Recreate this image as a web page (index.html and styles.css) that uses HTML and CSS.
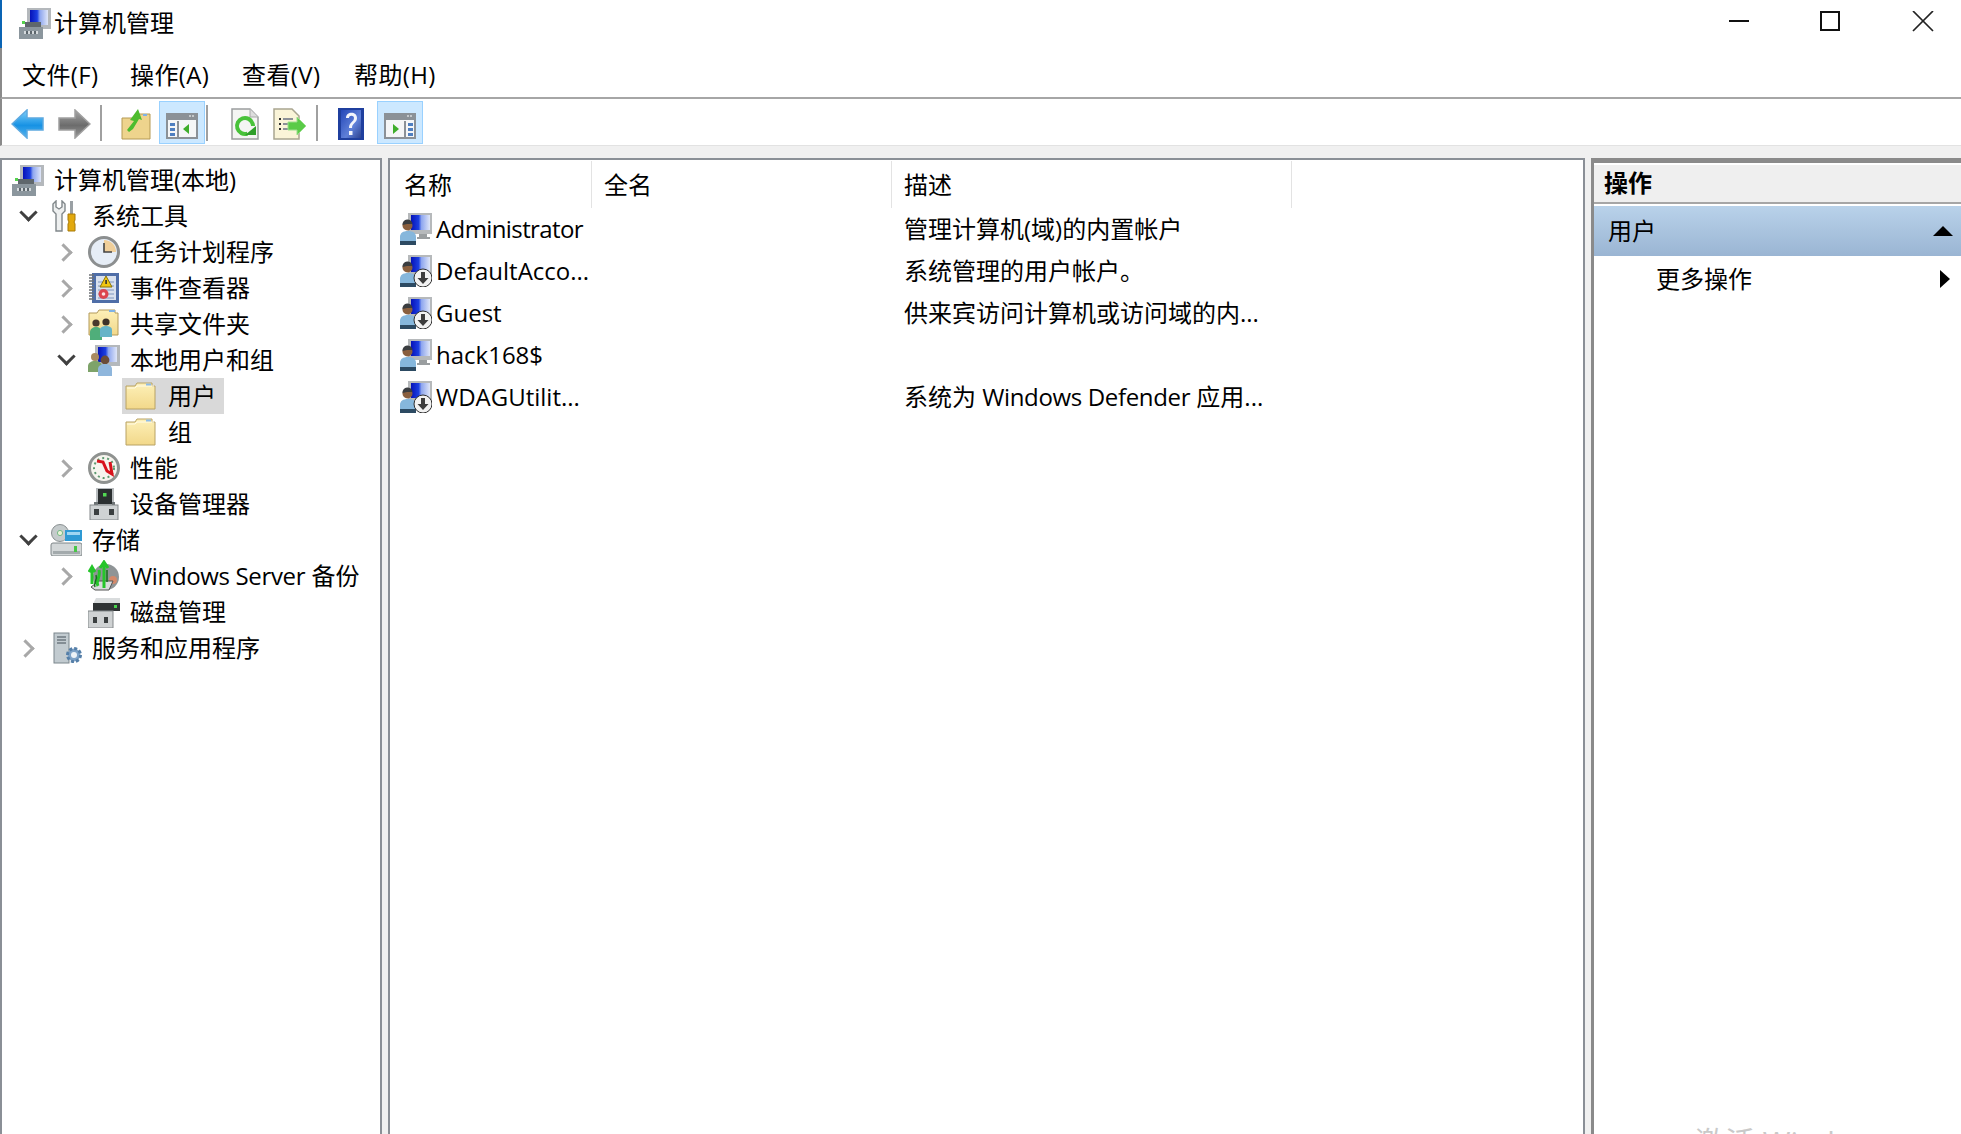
FILE: index.html
```html
<!DOCTYPE html>
<html lang="zh-CN">
<head>
<meta charset="utf-8">
<title>计算机管理</title>
<link rel="stylesheet" href="styles.css">
</head>
<body>
<svg class="defs" aria-hidden="true">
  <defs>
    <linearGradient id="scr" x1="0" x2="1" y1="0" y2="0"><stop offset="0" stop-color="#0612b8"/><stop offset=".4" stop-color="#1c3fe0"/><stop offset=".55" stop-color="#8ea6ef"/><stop offset="1" stop-color="#dfe6f8"/></linearGradient>
    <linearGradient id="fold" x1="0" x2="0" y1="0" y2="1"><stop offset="0" stop-color="#fdf0b8"/><stop offset="1" stop-color="#f2d88a"/></linearGradient>
    <linearGradient id="blueArrow" x1="0" x2="0" y1="0" y2="1"><stop offset="0" stop-color="#7fd0fa"/><stop offset=".55" stop-color="#1792e4"/><stop offset="1" stop-color="#57b4ee"/></linearGradient>
    <linearGradient id="grayArrow" x1="0" x2="0" y1="0" y2="1"><stop offset="0" stop-color="#a8a8a8"/><stop offset=".55" stop-color="#6c6c6c"/><stop offset="1" stop-color="#9a9a9a"/></linearGradient>
    <linearGradient id="help" x1="0" x2="1" y1="0" y2="1"><stop offset="0" stop-color="#2447b8"/><stop offset=".6" stop-color="#5f80d8"/><stop offset="1" stop-color="#2d4390"/></linearGradient>

    <symbol id="i-computer" viewBox="0 0 32 32">
      <rect x="8" y="1" width="24" height="21" fill="#b4b8bc"/>
      <rect x="11" y="3" width="18" height="15" fill="url(#scr)"/>
      <path d="M6 15h16v5H6z" fill="#5f676c"/>
      <rect x="0" y="20" width="24" height="12" fill="#8b969d"/>
      <rect x="5" y="24" width="14" height="3" fill="#d4d9dc"/>
      <rect x="7" y="24" width="2" height="3" fill="#5c666c"/><rect x="11" y="24" width="2" height="3" fill="#5c666c"/><rect x="15" y="24" width="2" height="3" fill="#5c666c"/>
      <rect x="3" y="14" width="3" height="3" fill="#55d24d"/>
    </symbol>

    <symbol id="i-tools" viewBox="0 0 32 32">
      <path d="M6 1v6l3 2 3-2V1l3 3v7l-3 3v17H6V14l-3-3V4z" fill="#eef0f0" stroke="#80878a" stroke-width="1.4"/>
      <rect x="20" y="1" width="3" height="13" fill="#9aa0a4"/>
      <path d="M18 14h7v6l-1 2 1 2v7h-7v-7l1-2-1-2z" fill="#e2a90f" stroke="#a87a08"/>
    </symbol>

    <symbol id="i-clock" viewBox="0 0 32 32">
      <circle cx="16" cy="16" r="14.5" fill="#e6edf6" stroke="#8c8f90" stroke-width="3"/>
      <path d="M16 4a12 12 0 0 1 12 12H16z" fill="#f0cf9a"/>
      <path d="M16 7v9h8" fill="none" stroke="#444" stroke-width="1.6"/>
    </symbol>

    <symbol id="i-event" viewBox="0 0 32 32">
      <rect x="4" y="1" width="27" height="30" fill="#4f6ea8"/>
      <rect x="8" y="4" width="20" height="24" fill="#d9e1ee"/>
      <path d="M10 10h16M10 14h16M10 18h16M10 22h16M10 26h16" stroke="#7f96bf" stroke-width="1"/>
      <path d="M1 3h5M1 6h5M1 9h5M1 12h5M1 15h5M1 18h5M1 21h5M1 24h5M1 27h5" stroke="#6e7276" stroke-width="1.6"/>
      <path d="M18 4l6 11H12z" fill="#f1c613" stroke="#8a7409"/>
      <rect x="17.3" y="8" width="1.6" height="4" fill="#333"/>
      <circle cx="15.5" cy="22" r="5" fill="#dc4650"/>
      <circle cx="15.5" cy="22" r="1.8" fill="#fbe5e5"/>
    </symbol>

    <symbol id="i-share" viewBox="0 0 32 32">
      <path d="M1 5h8l2-3h16v3h3v22H1z" fill="url(#fold)" stroke="#b39a5b"/>
      <rect x="21" y="2" width="6" height="2" fill="#7fb2e6"/>
      <circle cx="8" cy="15" r="3.6" fill="#4a3a2c"/>
      <path d="M2 32v-8c0-3 3-5 6-5s6 2 6 5v8z" fill="#4fae7a"/>
      <circle cx="18" cy="14" r="3.6" fill="#3e3228"/>
      <path d="M12 29v-7c0-3 3-4 6-4s6 1 6 4v7z" fill="#66b4c8"/>
    </symbol>

    <symbol id="i-users" viewBox="0 0 32 32">
      <rect x="7" y="1" width="25" height="21" fill="#b4b8bc"/>
      <rect x="10" y="3" width="19" height="15" fill="url(#scr)"/>
      <circle cx="7" cy="13" r="4" fill="#a98a5f"/>
      <path d="M0 28v-6c0-3 3-5 7-5s7 2 7 5v6z" fill="#7ea36a"/>
      <circle cx="17" cy="16" r="4.4" fill="#6a4c38"/>
      <path d="M10 32v-7c0-3 3-5 7-5s7 2 7 5v7z" fill="#8fb6dc"/>
    </symbol>

    <symbol id="i-folder" viewBox="0 0 32 32">
      <path d="M1 6h9l2-3h15v3h3v23H1z" fill="url(#fold)" stroke="#b8a264"/>
      <path d="M2 8h8l2-2h17" fill="none" stroke="#fffbe6"/>
      <rect x="21" y="3.5" width="5" height="2" fill="#8dbbe8"/>
    </symbol>

    <symbol id="i-perf" viewBox="0 0 32 32">
      <circle cx="16" cy="16" r="14.5" fill="#f6f4ee" stroke="#8f9290" stroke-width="3"/>
      <circle cx="16" cy="16" r="10" fill="none" stroke="#5d9a70" stroke-width="2" stroke-dasharray="2 3"/>
      <path d="M9 9l6 1 4 9 5 3-2-12" fill="none" stroke="#d8121c" stroke-width="3"/>
    </symbol>

    <symbol id="i-device" viewBox="0 0 32 32">
      <rect x="8" y="0" width="18" height="17" fill="#b8bcbe"/>
      <rect x="10" y="1" width="14" height="15" fill="#2b2f30"/>
      <rect x="15" y="5" width="3.5" height="3.5" fill="#52d852"/>
      <path d="M6 14h4v4H6zM24 14h3v4h-3z" fill="#6d7375"/>
      <rect x="2" y="17" width="28" height="15" fill="#cfd2d3" stroke="#83888a"/>
      <rect x="6" y="21" width="5" height="6" fill="#3b3f40"/><rect x="21" y="21" width="5" height="6" fill="#3b3f40"/>
    </symbol>

    <symbol id="i-storage" viewBox="0 0 32 32">
      <circle cx="10" cy="9" r="8.500" fill="#c5cbcc" stroke="#8a9092"/>
      <circle cx="10" cy="9" r="2.600" fill="#e9f3d6" stroke="#7b8"/>
      <rect x="15" y="6" width="17" height="11" fill="#2e9ad4"/>
      <rect x="17" y="8" width="13" height="3" fill="#9ed6f2"/>
      <rect x="1" y="19" width="31" height="13" rx="2" fill="#d3d7d8" stroke="#7f8688"/>
      <rect x="3" y="27" width="27" height="3" fill="#a3aaac"/>
      <rect x="24" y="22" width="3" height="6" fill="#48c648"/>
    </symbol>

    <symbol id="i-backup" viewBox="0 0 32 32">
      <circle cx="18" cy="17" r="13" fill="#8f9496"/>
      <circle cx="25" cy="20" r="4" fill="#d3896b"/>
      <path d="M3 27l8-6h14l-4 9H7z" fill="#d8dbdc" stroke="#555"/>
      <path d="M4 24V8M1 12l3-5 3 5M16 28V3M12 8l4-6 4 6M10 26c-3-6 3-8 1-16" fill="none" stroke="#25c52a" stroke-width="3"/>
      <path d="M7 27c-2-4 3-7 1-12M19 22V10" fill="none" stroke="#176d1e" stroke-width="1.500"/>
    </symbol>

    <symbol id="i-disk" viewBox="0 0 32 32">
      <path d="M5 8l3-6h24v13H5z" fill="#d9dcdd"/>
      <rect x="5" y="7" width="27" height="8" fill="#2f3334"/>
      <rect x="26" y="9" width="3" height="3" fill="#46d24a"/>
      <rect x="0" y="15" width="25" height="17" fill="#cfd2d3" stroke="#84898b"/>
      <rect x="5" y="21" width="4" height="6" fill="#3b3f40"/><rect x="16" y="21" width="4" height="6" fill="#3b3f40"/>
    </symbol>

    <symbol id="i-services" viewBox="0 0 32 32">
      <rect x="4" y="1" width="15" height="30" fill="#c2cbd0" stroke="#7b868c"/>
      <path d="M7 5h9M7 8h9M7 11h9" stroke="#6f7a80" stroke-width="1.500"/>
      <circle cx="24" cy="23" r="6.500" fill="#7fa3c8" stroke="#557fa8" stroke-width="3" stroke-dasharray="3 2"/>
      <circle cx="24" cy="23" r="3" fill="#eef3f8"/>
    </symbol>

    <symbol id="i-user" viewBox="0 0 32 32">
      <rect x="8" y="0" width="24" height="21" fill="#b6b9bb"/>
      <rect x="11" y="2" width="19" height="15" fill="url(#scr)"/>
      <path d="M19 21h8v3h3v2H17v-2h2z" fill="#9a9ea0"/>
      <circle cx="7.500" cy="12.500" r="5" fill="#8a5f3e"/>
      <path d="M2.500 12a5 5 0 0 1 10-1H7z" fill="#3a3d40"/>
      <path d="M0 32v-8c0-4 3-6 8-6s8 2 8 6v8z" fill="#86b7dc"/>
      <path d="M0 32v-4h16v4z" fill="#2c4a62"/>
    </symbol>

    <symbol id="i-user-off" viewBox="0 0 32 32">
      <use href="#i-user" width="32" height="32"/>
      <circle cx="23" cy="23" r="9" fill="#f2f2f2" stroke="#2e2e2e" stroke-width="1"/>
      <path d="M21 17h4v6h3.500L23 29l-5.500-6H21z" fill="#3d3d3d"/>
    </symbol>

    <symbol id="i-pane" viewBox="0 0 32 26">
      <rect x="1" y="1" width="30" height="24" fill="#f5f6f7" stroke="#8b9197" stroke-width="2"/>
      <rect x="1" y="1" width="30" height="6" fill="#8b9197"/>
      <path d="M23 3h2M26 3h2" stroke="#d7dadd" stroke-width="1.500"/>
    </symbol>
  </defs>
</svg>

<div class="titlebar">
  <svg class="ico-title"><use href="#i-computer"/></svg>
  <span class="title-text">计算机管理</span>
  <div class="controls">
    <button class="ctl"><svg width="22" height="22" viewBox="0 0 22 22"><path d="M1 10h20" stroke="#111" stroke-width="2"/></svg></button>
    <button class="ctl"><svg width="22" height="22" viewBox="0 0 22 22"><rect x="1" y="1" width="18" height="18" fill="none" stroke="#111" stroke-width="2"/></svg></button>
    <button class="ctl"><svg width="22" height="22" viewBox="0 0 22 22"><path d="M1 0l20 20M21 0L1 20" stroke="#222" stroke-width="1.700"/></svg></button>
  </div>
</div>

<nav class="menubar">
  <span>文件(F)</span><span>操作(A)</span><span>查看(V)</span><span>帮助(H)</span>
</nav>

<div class="toolbar">
  <button class="tb tb-back"><svg width="34" height="30" viewBox="0 0 34 30"><path d="M1 15L16 1v8h16v12H16v8z" fill="url(#blueArrow)" stroke="#5ea9e0" stroke-width="1.500"/></svg></button>
  <button class="tb tb-fwd"><svg width="34" height="30" viewBox="0 0 34 30"><path d="M33 15L18 1v8H2v12h16v8z" fill="url(#grayArrow)" stroke="#a0a0a0" stroke-width="1.500"/></svg></button>
  <i class="sep"></i>
  <button class="tb tb-up"><svg width="30" height="32" viewBox="0 0 30 32"><path d="M1 10h12l3-4h13v25H1z" fill="#eed48d" stroke="#b59a54"/><path d="M22 6h4v2h-4z" fill="#7fb2e6"/><path d="M6 22l7-9-4-1 8-11 4 11-3-1-6 10-4 3z" fill="#4ebc2e"/></svg></button>
  <button class="tb tb-on"><svg class="pane" viewBox="0 0 32 26"><use href="#i-pane"/><rect x="11" y="8" width="2" height="16" fill="#8b9197"/><path d="M4 10h5v3H4zM4 15h5v3H4zM4 20h5v3H4z" fill="#4f7fc0"/><path d="M23 11v10l-6-5z" fill="#3fae2c"/></svg></button>
  <i class="sep"></i>
  <button class="tb tb-refresh"><svg width="28" height="32" viewBox="0 0 28 32"><path d="M1 1h18l8 8v22H1z" fill="#f4f5f3" stroke="#9a9d9f" stroke-width="1.500"/><path d="M19 1v8h8" fill="#ddd" stroke="#aaa"/><circle cx="14" cy="18" r="8" fill="none" stroke="#48c23a" stroke-width="4" stroke-dasharray="40 10.300" transform="rotate(72 14 18)"/><path d="M14 27h11v-9z" fill="#2f9e2a"/></svg></button>
  <button class="tb tb-export"><svg width="34" height="32" viewBox="0 0 34 32"><path d="M1 1h18l7 7v23H1z" fill="#faf4d8" stroke="#a9a590" stroke-width="1.500"/><path d="M6 11h2M6 16h2M6 21h2" stroke="#333" stroke-width="2"/><path d="M10 11h10M10 16h8M10 21h8" stroke="#8d9197" stroke-width="2"/><path d="M15 14h9V9l9 9-9 9v-5h-9z" fill="#5acb48" stroke="#9adf8c"/></svg></button>
  <i class="sep"></i>
  <button class="tb tb-help"><svg width="26" height="32" viewBox="0 0 26 32"><rect width="26" height="32" fill="#1f3f9e"/><rect x="3" y="2" width="20" height="28" fill="url(#help)"/><path d="M8 10c0-7 11-7 11 0 0 5-5 5-5 10h-3c0-6 5-6 5-10 0-3-5-3-5 0z" fill="#f2f4fb"/><rect x="11" y="23" width="3.500" height="4" fill="#f2f4fb"/></svg></button>
  <button class="tb tb-on tb-last"><svg class="pane" viewBox="0 0 32 26"><use href="#i-pane"/><rect x="20" y="8" width="2" height="16" fill="#8b9197"/><path d="M24 10h5v3h-5zM24 15h5v3h-5zM24 20h5v3h-5z" fill="#4f7fc0"/><path d="M9 11v10l6-5z" fill="#3fae2c"/></svg></button>
</div>

<main class="workspace">
  <section class="pane-tree">
    <div class="row l0"><svg class="ico"><use href="#i-computer"/></svg><span>计算机管理(本地)</span></div>
    <div class="row l1"><span class="chev down"></span><svg class="ico"><use href="#i-tools"/></svg><span>系统工具</span></div>
    <div class="row l2"><span class="chev"></span><svg class="ico"><use href="#i-clock"/></svg><span>任务计划程序</span></div>
    <div class="row l2"><span class="chev"></span><svg class="ico"><use href="#i-event"/></svg><span>事件查看器</span></div>
    <div class="row l2"><span class="chev"></span><svg class="ico"><use href="#i-share"/></svg><span>共享文件夹</span></div>
    <div class="row l2"><span class="chev down"></span><svg class="ico"><use href="#i-users"/></svg><span>本地用户和组</span></div>
    <div class="row l3"><div class="selected"><svg class="ico ico-f"><use href="#i-folder"/></svg><span>用户</span></div></div>
    <div class="row l3"><div class="plain"><svg class="ico ico-f"><use href="#i-folder"/></svg><span>组</span></div></div>
    <div class="row l2"><span class="chev"></span><svg class="ico"><use href="#i-perf"/></svg><span>性能</span></div>
    <div class="row l2"><span class="chev none"></span><svg class="ico"><use href="#i-device"/></svg><span>设备管理器</span></div>
    <div class="row l1"><span class="chev down"></span><svg class="ico"><use href="#i-storage"/></svg><span>存储</span></div>
    <div class="row l2"><span class="chev"></span><svg class="ico"><use href="#i-backup"/></svg><span><span class="tight-sm">Windows Server</span> 备份</span></div>
    <div class="row l2"><span class="chev none"></span><svg class="ico"><use href="#i-disk"/></svg><span>磁盘管理</span></div>
    <div class="row l1"><span class="chev"></span><svg class="ico"><use href="#i-services"/></svg><span>服务和应用程序</span></div>
  </section>

  <section class="pane-list">
    <div class="list">
      <div class="th th-a">名称</div><div class="th">全名</div><div class="th">描述</div>
      <div class="cell name"><svg class="ico"><use href="#i-user"/></svg><span class="tight">Administrator</span></div><div class="cell"></div><div class="cell desc">管理计算机(域)的内置帐户</div>
      <div class="cell name"><svg class="ico"><use href="#i-user-off"/></svg><span>DefaultAcco...</span></div><div class="cell"></div><div class="cell desc">系统管理的用户帐户。</div>
      <div class="cell name"><svg class="ico"><use href="#i-user-off"/></svg><span>Guest</span></div><div class="cell"></div><div class="cell desc">供来宾访问计算机或访问域的内...</div>
      <div class="cell name"><svg class="ico"><use href="#i-user"/></svg><span>hack168$</span></div><div class="cell"></div><div class="cell desc"></div>
      <div class="cell name"><svg class="ico"><use href="#i-user-off"/></svg><span>WDAGUtilit...</span></div><div class="cell"></div><div class="cell desc"><span>系统为 <span class="tight-sm">Windows Defender</span> 应用...</span></div>
    </div>
  </section>

  <aside class="pane-actions">
    <div class="act-head">操作</div>
    <div class="act-group"><span>用户</span><i class="tri-up"></i></div>
    <div class="act-item"><span>更多操作</span><i class="tri-right"></i></div>
  </aside>
</main>

<div class="watermark">激活 Windows</div>
</body>
</html>
```

FILE: styles.css
```css
* { box-sizing: border-box; }
html, body { margin: 0; padding: 0; height: 100%; }
body {
  width: 1961px;
  height: 1134px;
  overflow: hidden;
  position: relative;
  display: flex;
  flex-direction: column;
  background: #fff;
  color: #000;
  font-family: "Open Sans", "Noto Sans CJK SC", sans-serif;
  font-size: 24px;
  line-height: 32px;
}
.defs { position: absolute; width: 0; height: 0; }
button { border: 0; background: none; padding: 0; margin: 0; display: flex; align-items: center; justify-content: center; }
svg { display: block; flex: none; }

.titlebar {
  height: 48px;
  display: flex;
  align-items: center;
  padding-left: 17px;
  border-left: 2px solid #0a64b4;
}
.ico-title { width: 32px; height: 32px; margin-top: -2px; margin-right: 3px; }
.title-text { margin-top: -2px; }
.controls { margin-left: auto; margin-right: -8px; display: flex; margin-top: -4px; }
.ctl { width: 92px; height: 36px; }

.menubar {
  height: 51px;
  display: grid;
  grid-template-columns: 108px 112px 112px auto;
  align-items: center;
  padding: 4px 0 0 20px;
  letter-spacing: .4px;
  border-left: 2px solid #8a8a8a;
  border-bottom: 2px solid #a6a6a6;
}

.toolbar {
  height: 47px;
  display: flex;
  align-items: center;
  padding-top: 1px;
  border-left: 2px solid #8a8a8a;
  border-bottom: 1px solid #e2e2e2;
}
.tb { height: 43px; width: 46px; }
.tb svg { margin-top: 2px; }
.tb-on { background: #cce8ff; border: 1px solid #99d1ff; }
.tb .pane { width: 32px; height: 26px; margin-top: 6px; }
.sep { width: 2px; height: 36px; background: #a0a0a0; }
.tb-back { margin-left: 8px; width: 36px; }
.tb-fwd { margin-left: 10px; width: 36px; }
.tb-fwd + .sep { margin-left: 8px; }
.tb-up { margin-left: 11px; width: 46px; }
.tb-on + .sep { margin-left: 1px; }
.tb-refresh { margin-left: 19px; width: 36px; }
.tb-export { margin-left: 8px; width: 38px; }
.tb-export + .sep { margin-left: 7px; }
.tb-help { margin-left: 18px; width: 30px; }
.tb-last { margin-left: 11px; }

.workspace {
  flex: 1;
  min-height: 0;
  display: flex;
  gap: 6px;
  padding-top: 12px;
  background: #f0f0f0;
}
.pane-tree {
  width: 382px;
  background: #fff;
  border: 2px solid #8a8f96;
  border-bottom: 0;
  padding-top: 2px;
}
.row { height: 36px; display: flex; align-items: center; white-space: nowrap; }
.ico { width: 32px; height: 32px; }
.l0 { padding-left: 10px; }
.l0 .ico { margin-right: 10px; }
.l1 { padding-left: 15px; }
.l2 { padding-left: 53px; }
.l1 .chev { margin-right: 13px; }
.l1 .ico { margin-right: 10px; }
.l2 .chev { margin-right: 13px; }
.l2 .ico { margin-right: 10px; }
.chev { width: 20px; height: 20px; position: relative; flex: none; }
.chev::before {
  content: "";
  position: absolute;
  left: 2px;
  top: 4px;
  width: 10px;
  height: 10px;
  border-right: 3px solid #a8a8a8;
  border-top: 3px solid #a8a8a8;
  transform: rotate(45deg);
}
.chev.down::before {
  left: 5px;
  top: 0;
  border-color: #404040;
  transform: rotate(135deg);
}
.chev.none::before { display: none; }
.l3 { padding-left: 120px; }
.selected, .plain { height: 36px; display: flex; align-items: center; padding: 0 8px 0 3px; }
.selected { background: #d9d9d9; }
.ico-f { margin-right: 11px; }

.pane-list {
  width: 1197px;
  background: #fff;
  border: 2px solid #8a8f96;
  border-bottom: 0;
  padding-top: 1px;
}
.list { display: grid; grid-template-columns: 202px 300px 400px; grid-auto-rows: 42px; grid-template-rows: 47px; }
.th { display: flex; align-items: center; padding-left: 12px; border-right: 1px solid #e3e3e3; }
.th-a { padding-left: 14px; }
.cell { display: flex; align-items: center; }
.name { padding-left: 10px; gap: 4px; white-space: nowrap; }
.desc { padding-left: 12px; white-space: nowrap; }
.tight { letter-spacing: -.6px; }
.tight-sm { letter-spacing: -.35px; }

.pane-actions {
  flex: 1;
  background: #fff;
  border-left: 3px solid #8a8a8a;
  border-top: 5px solid #8a8a8a;
  padding-top: 2px;
}
.act-head {
  height: 39px;
  display: flex;
  align-items: center;
  padding: 0 0 2px 10px;
  font-weight: 700;
  background: #efefef;
  border-bottom: 2px solid #a6a6a6;
}
.act-group {
  margin-top: 2px;
  height: 50px;
  display: flex;
  align-items: center;
  justify-content: space-between;
  padding: 0 8px 0 14px;
  background: linear-gradient(#b9d2ea, #9ab5d3);
}
.tri-up { width: 0; height: 0; border-left: 10px solid transparent; border-right: 10px solid transparent; border-bottom: 10px solid #000; }
.act-item {
  height: 46px;
  display: flex;
  align-items: center;
  justify-content: space-between;
  padding: 0 11px 0 62px;
}
.tri-right { width: 0; height: 0; border-top: 9px solid transparent; border-bottom: 9px solid transparent; border-left: 10px solid #000; }

.watermark {
  position: absolute;
  left: 1695px;
  top: 1122px;
  font-size: 30px;
  line-height: 40px;
  color: #c9c9c9;
  white-space: nowrap;
}
```
